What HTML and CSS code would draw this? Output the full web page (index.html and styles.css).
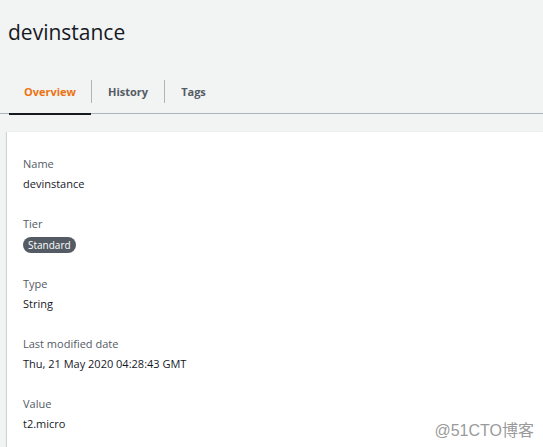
FILE: index.html
```html
<!DOCTYPE html>
<html lang="en">
<head>
<meta charset="utf-8">
<title>devinstance</title>
<link rel="stylesheet" href="styles.css">
</head>
<body>
<div class="page">
  <h1 class="title">devinstance</h1>
  <nav class="tabs">
    <div class="tab active">Overview</div>
    <div class="sep"></div>
    <div class="tab">History</div>
    <div class="sep"></div>
    <div class="tab">Tags</div>
  </nav>
  <section class="card">
    <div class="field">
      <div class="label">Name</div>
      <div class="value">devinstance</div>
    </div>
    <div class="field">
      <div class="label">Tier</div>
      <div class="value"><span class="badge">Standard</span></div>
    </div>
    <div class="field">
      <div class="label">Type</div>
      <div class="value">String</div>
    </div>
    <div class="field">
      <div class="label">Last modified date</div>
      <div class="value">Thu, 21 May 2020 04:28:43 GMT</div>
    </div>
    <div class="field">
      <div class="label">Value</div>
      <div class="value">t2.micro</div>
    </div>
  </section>
  <div class="watermark">@51CTO博客</div>
</div>
</body>
</html>
```

FILE: styles.css
```css
html, body {
  margin: 0;
  padding: 0;
  background: #f2f3f3;
  font-family: "Open Sans", "Noto Sans", sans-serif;
  color: #16191f;
}
.page {
  position: relative;
  width: 543px;
  height: 447px;
  overflow: hidden;
}
.title {
  margin: 0;
  padding: 18px 0 0 8px;
  height: 52px;
  box-sizing: border-box;
  font-size: 21px;
  font-weight: 400;
  line-height: 28px;
  color: #16191f;
}
.tabs {
  display: flex;
  align-items: center;
  margin-top: 18px;
  height: 44px;
  border-bottom: 1px solid #aab7b8;
  box-sizing: border-box;
}
.tab {
  height: 44px;
  box-sizing: border-box;
  display: flex;
  align-items: center;
  font-size: 11px;
  font-weight: 700;
  color: #545b64;
  padding: 0 16px;
}
.tab.active {
  color: #ec7211;
  margin-left: 9px;
  padding: 0 15px;
  border-bottom: 2px solid #16191f;
  margin-bottom: -1px;
  height: 45px;
  padding-top: 1px;
}
.sep {
  width: 1px;
  height: 23px;
  background: #aab7b8;
}
.card {
  margin: 18px 0 0 7px;
  background: #ffffff;
  box-shadow: 0 1px 1px 0 rgba(0, 28, 36, 0.2), -1px 0 1px 0 rgba(0, 28, 36, 0.12);
  padding: 22px 16px 0 16px;
  height: 400px;
}
.field {
  margin-bottom: 20px;
}
.label {
  font-size: 11px;
  line-height: 20px;
  color: #545b64;
}
.value {
  font-size: 11px;
  line-height: 20px;
  color: #16191f;
}
.badge {
  display: inline-block;
  background: #545b64;
  color: #ffffff;
  border-radius: 8px;
  padding: 0 5px;
  font-size: 10px;
  line-height: 16px;
  vertical-align: middle;
}
.watermark {
  position: absolute;
  right: 7px;
  bottom: 6px;
  font-family: "Liberation Sans", "Noto Sans CJK SC", sans-serif;
  font-size: 16px;
  color: #9a9a9a;
  background: rgba(255, 255, 255, 0.8);
  padding: 0 2px;
}
```
